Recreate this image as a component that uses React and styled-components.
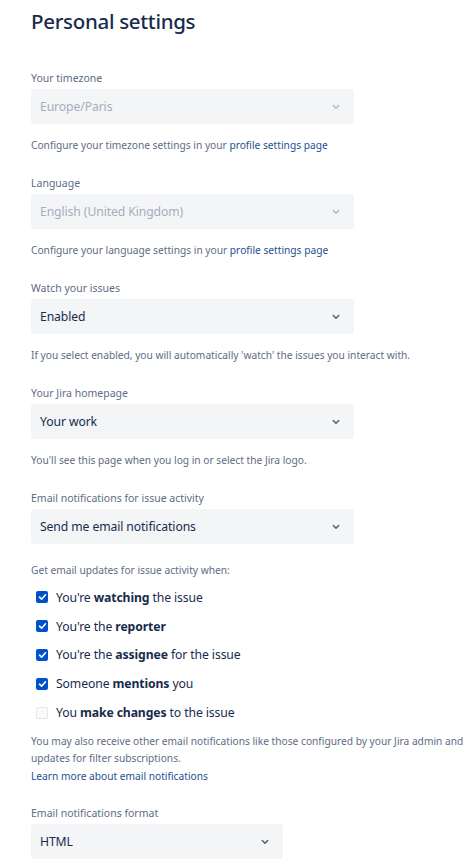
import React from "react";
import styled, { createGlobalStyle } from "styled-components";

const Global = createGlobalStyle`
  html, body { margin: 0; padding: 0; background: #fff; }
  body { font-family: "Noto Sans", "Open Sans", sans-serif; color: #172B4D; }
`;

const Page = styled.div`
  padding: 6px 0 0 31px;
  width: 443px;
`;

const Title = styled.h1`
  margin: 0;
  font-size: 20.5px;
  font-weight: 500;
  letter-spacing: -0.3px;
  line-height: 30px;
  color: #172B4D;
`;

const Form = styled.div`
  display: flex;
  flex-direction: column;
  margin-top: 34px;
`;

const Field = styled.div`
  display: flex;
  flex-direction: column;
  margin-bottom: ${(p) => p.$mb ?? 21}px;
`;

const Label = styled.div`
  font-size: 10.5px;
  line-height: 16px;
  color: #5E6C84;
  margin-bottom: 3px;
`;

const Select = styled.div`
  width: ${(p) => p.$w || 323}px;
  height: 35px;
  box-sizing: border-box;
  background: #F4F5F7;
  border-radius: 3px;
  display: flex;
  align-items: center;
  justify-content: space-between;
  padding: 0 14px 0 9px;
  font-size: 12.2px;
  letter-spacing: -0.1px;
  color: ${(p) => (p.$disabled ? "#A5ADBA" : "#172B4D")};
`;

const Helper = styled.div`
  font-size: 10.2px;
  line-height: ${(p) => p.$lh ?? 17}px;
  color: #5E6C84;
  margin-top: ${(p) => p.$mt ?? 13}px;
`;

const Link = styled.a`
  text-decoration: none;
  color: #1D4F91;
`;

const CheckList = styled.div`
  display: flex;
  flex-direction: column;
  margin-top: 4px;
  margin-bottom: 6px;
`;

const CheckRow = styled.div`
  display: flex;
  align-items: center;
  height: 28.8px;
  padding-left: 5px;
  font-size: 12.2px;
  letter-spacing: -0.1px;
  color: #172B4D;
  b { font-weight: 700; }
`;

const Box = styled.span`
  width: 12px;
  height: 12px;
  border-radius: 2px;
  box-sizing: border-box;
  background: ${(p) => (p.$on ? "#0052CC" : "#FAFBFC")};
  border: ${(p) => (p.$on ? "none" : "1.5px solid #E4E6EA")};
  display: inline-flex;
  align-items: center;
  justify-content: center;
  margin-right: 8px;
  flex-shrink: 0;
`;

const Chevron = ({ color }) => (
  <svg width="8" height="6" viewBox="0 0 8 6">
    <path d="M1.3 1.5 L4 4.2 L6.7 1.5" fill="none" stroke={color} strokeWidth="1.5" strokeLinecap="round" strokeLinejoin="round" />
  </svg>
);

const Check = () => (
  <svg width="9" height="8" viewBox="0 0 9 8">
    <path d="M1.5 4.2 L3.6 6.2 L7.5 1.8" fill="none" stroke="#fff" strokeWidth="1.6" strokeLinecap="round" strokeLinejoin="round" />
  </svg>
);

const SelectField = ({ value, disabled, w }) => (
  <Select $disabled={disabled} $w={w}>
    <span>{value}</span>
    <Chevron color={disabled ? "#B3BAC5" : "#505F79"} />
  </Select>
);

const checks = [
  [true, <>You're <b>watching</b> the issue</>],
  [true, <>You're the <b>reporter</b></>],
  [true, <>You're the <b>assignee</b> for the issue</>],
  [true, <>Someone <b>mentions</b> you</>],
  [false, <>You <b>make changes</b> to the issue</>],
];

export default function App() {
  return (
    <Page>
      <Global />
      <Title>Personal settings</Title>
      <Form>
        <Field>
          <Label>Your timezone</Label>
          <SelectField value="Europe/Paris" disabled />
          <Helper>Configure your timezone settings in your <Link href="#">profile settings page</Link></Helper>
        </Field>
        <Field>
          <Label>Language</Label>
          <SelectField value="English (United Kingdom)" disabled />
          <Helper>Configure your language settings in your <Link href="#">profile settings page</Link></Helper>
        </Field>
        <Field>
          <Label>Watch your issues</Label>
          <SelectField value="Enabled" />
          <Helper>If you select enabled, you will automatically 'watch' the issues you interact with.</Helper>
        </Field>
        <Field>
          <Label>Your Jira homepage</Label>
          <SelectField value="Your work" />
          <Helper>You'll see this page when you log in or select the Jira logo.</Helper>
        </Field>
        <Field $mb={20}>
          <Label>Email notifications for issue activity</Label>
          <SelectField value="Send me email notifications" />
          <Helper $mt={18}>Get email updates for issue activity when:</Helper>
          <CheckList>
            {checks.map(([on, t], i) => (
              <CheckRow key={i}>
                <Box $on={on}>{on && <Check />}</Box>
                <span>{t}</span>
              </CheckRow>
            ))}
          </CheckList>
          <Helper $mt={0} $lh={17.5}>
            You may also receive other email notifications like those configured by your Jira admin and updates for filter subscriptions.
            <br />
            <Link href="#">Learn more about email notifications</Link>
          </Helper>
        </Field>
        <Field>
          <Label>Email notifications format</Label>
          <SelectField value="HTML" w={252} />
        </Field>
      </Form>
    </Page>
  );
}
